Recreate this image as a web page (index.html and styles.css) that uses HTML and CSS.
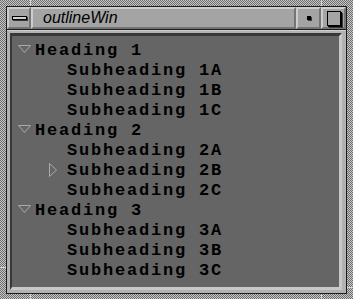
FILE: index.html
```html
<!DOCTYPE html>
<html lang="en">
<head>
    <meta charset="UTF-8">
    <title>outlineWin</title>
    <link rel="stylesheet" href="styles.css">
</head>
<body>
    <div class="window">
        <span class="notch notch-top-left"></span>
        <span class="notch notch-top-right"></span>
        <span class="notch notch-bottom-left"></span>
        <span class="notch notch-bottom-right"></span>
        <span class="notch notch-left-bottom"></span>
        <span class="notch notch-right-bottom"></span>
        <div class="frame">
            <div class="titlebar">
                <div class="tb-btn menu-btn"><span class="menu-bar"></span></div>
                <div class="tb-title">outlineWin</div>
                <div class="tb-btn min-btn"><span class="min-dot"></span></div>
                <div class="tb-btn max-btn"><span class="max-box"></span></div>
            </div>
            <div class="client">
                <div class="outline">
                    <div class="row heading">
                        <span class="twisty"><svg width="13" height="8" viewBox="0 0 13 8"><path d="M0.5 0.5 H12.5 L6.5 7.5 Z" class="tri"/></svg></span>
                        <span class="label">Heading 1</span>
                    </div>
                    <div class="row sub"><span class="twisty"></span><span class="label">Subheading 1A</span></div>
                    <div class="row sub"><span class="twisty"></span><span class="label">Subheading 1B</span></div>
                    <div class="row sub"><span class="twisty"></span><span class="label">Subheading 1C</span></div>
                    <div class="row heading">
                        <span class="twisty"><svg width="13" height="8" viewBox="0 0 13 8"><path d="M0.5 0.5 H12.5 L6.5 7.5 Z" class="tri"/></svg></span>
                        <span class="label">Heading 2</span>
                    </div>
                    <div class="row sub"><span class="twisty"></span><span class="label">Subheading 2A</span></div>
                    <div class="row sub">
                        <span class="twisty"><svg width="8" height="14" viewBox="0 0 8 14"><path d="M0.5 0.5 L7.5 7 L0.5 13.5 Z" class="tri"/></svg></span>
                        <span class="label">Subheading 2B</span>
                    </div>
                    <div class="row sub"><span class="twisty"></span><span class="label">Subheading 2C</span></div>
                    <div class="row heading">
                        <span class="twisty"><svg width="13" height="8" viewBox="0 0 13 8"><path d="M0.5 0.5 H12.5 L6.5 7.5 Z" class="tri"/></svg></span>
                        <span class="label">Heading 3</span>
                    </div>
                    <div class="row sub"><span class="twisty"></span><span class="label">Subheading 3A</span></div>
                    <div class="row sub"><span class="twisty"></span><span class="label">Subheading 3B</span></div>
                    <div class="row sub"><span class="twisty"></span><span class="label">Subheading 3C</span></div>
                </div>
            </div>
        </div>
    </div>
</body>
</html>
```

FILE: styles.css
```css
html, body {
    margin: 0;
    padding: 0;
}

body {
    background-color: #9a9a9a;
}

.window {
    position: relative;
    width: 353px;
    height: 299px;
    box-sizing: border-box;
    padding: 6px 6px 5px 6px;
    background: repeating-conic-gradient(#c8c8c8 0 25%, #6c6c6c 0 50%) 0 0 / 2px 2px;
}

.notch {
    position: absolute;
    background-color: #d8d8d8;
}

.notch-top-left { left: 30px; top: 0; width: 1px; height: 6px; }
.notch-top-right { left: 321px; top: 0; width: 1px; height: 6px; }
.notch-bottom-left { left: 30px; bottom: 0; width: 1px; height: 5px; }
.notch-bottom-right { left: 321px; bottom: 0; width: 1px; height: 5px; }
.notch-left-bottom { left: 0; top: 267px; width: 6px; height: 1px; }
.notch-right-bottom { right: 0; top: 287px; width: 6px; height: 1px; }

.frame {
    height: 100%;
    box-sizing: border-box;
    border: 1px solid #1c1c1c;
    display: flex;
    flex-direction: column;
    background-color: #b2b2b2;
}

.titlebar {
    display: flex;
    height: 22px;
    border-bottom: 1px solid #1c1c1c;
    background-color: #a4a4a4;
}

.tb-btn,
.tb-title {
    box-sizing: border-box;
    border-top: 2px solid #cdcdcd;
    border-left: 2px solid #cdcdcd;
    border-bottom: 2px solid #747474;
    border-right: 2px solid #747474;
    display: flex;
    align-items: center;
}

.menu-btn {
    width: 24px;
    justify-content: center;
}

.menu-bar {
    width: 13px;
    height: 2px;
    border: 1px solid #000;
    background-color: #d0d0d0;
    box-shadow: 1px 1px 0 #3a3a3a;
}

.tb-title {
    flex: 1;
    padding-left: 10px;
    font-family: "Liberation Sans", Arial, sans-serif;
    font-style: italic;
    font-size: 16px;
    color: #000;
}

.min-btn {
    width: 25px;
    justify-content: center;
}

.min-dot {
    width: 4px;
    height: 4px;
    background-color: #000;
    box-shadow: 1px 1px 0 #3a3a3a;
}

.max-btn {
    width: 25px;
    justify-content: center;
}

.max-box {
    width: 12px;
    height: 13px;
    border: 1px solid #000;
    background-color: #a4a4a4;
    box-shadow: 1px 1px 0 #000, 2px 2px 0 #3a3a3a;
}

.client {
    flex: 1;
    padding: 2px 4px 3px 3px;
    border-top: 1px solid #d0d0d0;
    display: flex;
}

.outline {
    flex: 1;
    box-sizing: border-box;
    border-top: 3px solid #383838;
    border-left: 2px solid #383838;
    border-bottom: 3px solid #c8c8c8;
    border-right: 3px solid #c8c8c8;
    background-color: #656565;
    padding-top: 4px;
}

.row {
    display: flex;
    align-items: center;
    height: 20px;
    font-family: "Liberation Mono", "Courier New", monospace;
    font-weight: bold;
    font-size: 17px;
    letter-spacing: 1.8px;
    color: #000;
    white-space: nowrap;
}

.heading {
    padding-left: 6px;
}

.heading .twisty {
    width: 17px;
    margin-top: -3px;
}

.sub {
    padding-left: 37px;
}

.sub .twisty {
    width: 18px;
}

.twisty svg {
    display: block;
}

.tri {
    fill: none;
    stroke: #aaaaaa;
    stroke-width: 1;
}
```
